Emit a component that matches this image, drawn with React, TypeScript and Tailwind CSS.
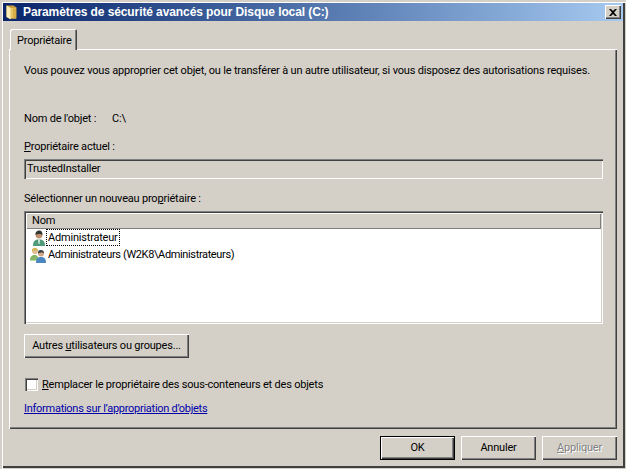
const raised =
  "bg-[#d4d0c8] shadow-[inset_1px_1px_0_#fff,inset_-1px_-1px_0_#404040,inset_-2px_-2px_0_#808080]";

function FolderIcon() {
  return (
    <svg width="11" height="15" viewBox="0 0 11 15" className="shrink-0">
      <path d="M0.5 0.5 H7.5 L10.5 2.5 V13.5 H4 L0.5 12 Z" fill="#c9a03c" />
      <path d="M4 3 H10 V13.5 H4 Z" fill="#e6c566" />
      <path d="M0.5 0.5 L4.5 3 V14.5 L0.5 12 Z" fill="#fbeeb4" />
      <path d="M7 3.5 H10 V13 H7 Z" fill="#d9ad45" />
    </svg>
  );
}

function CloseIcon() {
  return (
    <svg width="8" height="7" viewBox="0 0 8 7">
      <path d="M0 0h2l2 2 2-2h2L5 3.5 8 7H6L4 5 2 7H0l3-3.5z" fill="#000" />
    </svg>
  );
}

function UserIcon() {
  return (
    <svg width="16" height="16" viewBox="0 0 16 16" className="shrink-0">
      <path d="M2 16 C2 11 4 9.5 8 9.5 C12 9.5 14 11 14 16 Z" fill="#4f9a78" />
      <path d="M7 9.5 L9 9.5 L8.5 14 L7.5 14 Z" fill="#d9efe2" />
      <circle cx="8" cy="5" r="3.4" fill="#c08f6e" />
      <path d="M4.5 5 C4.3 1.5 6.5 0.5 8.2 0.5 C10.7 0.5 11.7 2.5 11.4 5 C10 3.5 6.5 3.5 4.5 5 Z" fill="#333835" />
    </svg>
  );
}

function GroupIcon() {
  return (
    <svg width="17" height="16" viewBox="0 0 17 16" className="shrink-0">
      <path d="M0 13.5 C0 9.5 2 8 4.5 8 C7 8 8.5 9.5 8.5 13.5 Z" fill="#85b565" />
      <circle cx="5" cy="4.2" r="2.8" fill="#e3bd96" />
      <path d="M2 5 C1.5 1.5 3.5 0.8 5 0.8 C7 0.8 8.2 2 8 5 C7 3 4 3 2 5 Z" fill="#d5b65c" />
      <path d="M6 16 C6 11.5 8 10 11 10 C14 10 16 11.5 16 16 Z" fill="#4a86c0" />
      <circle cx="11" cy="6.5" r="3" fill="#d4a784" />
      <path d="M8 6.5 C7.8 3.5 9.5 3 11 3 C13 3 14.2 4.2 14 6.5 C13 5.2 10 5.2 8 6.5 Z" fill="#3b4048" />
    </svg>
  );
}

function WinButton({
  children,
  width,
  primary,
  disabled,
}: {
  children: React.ReactNode;
  width: string;
  primary?: boolean;
  disabled?: boolean;
}) {
  return (
    <div
      className={`${width} h-[24px] flex items-center justify-center whitespace-nowrap ${raised} ${
        primary ? "outline outline-1 outline-black -outline-offset-1 !shadow-[inset_2px_2px_0_#fff,inset_-2px_-2px_0_#404040,inset_-3px_-3px_0_#808080]" : ""
      } ${disabled ? "text-[#808080] [text-shadow:1px_1px_0_#fff]" : "text-black"}`}
    >
      {children}
    </div>
  );
}

export default function App() {
  return (
    <div className="w-[626px] h-[469px] p-[3px] flex flex-col bg-[#d4d0c8] overflow-hidden font-['Roboto',sans-serif] text-[11px] leading-[14px] tracking-[-0.2px] text-black whitespace-nowrap shadow-[inset_2px_2px_0_#d4d0c8,inset_3px_3px_0_#fff,inset_-1px_-1px_0_#d4d0c8,inset_-3px_-3px_0_#404040]">
      <div className="h-[18px] flex items-center pl-[3px] pr-[2px] bg-linear-to-r from-[#0a246a] to-[#a6caf0]">
        <FolderIcon />
        <span className="ml-[6px] font-bold text-white font-['Liberation_Sans',sans-serif] text-[12px] tracking-[-0.1px]">
          Paramètres de sécurité avancés pour Disque local (C:)
        </span>
        <div className={`ml-auto w-[16px] h-[14px] flex items-center justify-center ${raised}`}>
          <CloseIcon />
        </div>
      </div>

      <div className="px-[6px] mt-[8px]">
        <div className="relative z-10 ml-[1px] -mb-[1px] w-[67px] h-[21px] pl-[7px] pt-[5px] rounded-t-[2px] bg-[#d4d0c8] shadow-[inset_1px_1px_0_#fff,inset_-1px_0_0_#404040,inset_-2px_0_0_#808080]">
          Propriétaire
        </div>
        <div className="h-[380px] pl-[15px] pr-[14px] pt-[15px] bg-[#d4d0c8] shadow-[inset_1px_1px_0_#fff,inset_-1px_-1px_0_#404040,inset_-2px_-2px_0_#808080]">
          <p className="tracking-[-0.18px]">Vous pouvez vous approprier cet objet, ou le transférer à un autre utilisateur, si vous disposez des autorisations requises.</p>

          <div className="mt-[34px] flex">
            <span className="w-[88px]">Nom de l'objet :</span>
            <span>C:\</span>
          </div>

          <p className="mt-[14px]">
            <u>P</u>ropriétaire actuel :
          </p>
          <div className="mt-[5px] h-[20px] pl-[3px] flex items-center bg-[#d4d0c8] shadow-[inset_1px_1px_0_#808080,inset_2px_2px_0_#404040,inset_-1px_-1px_0_#fff]">
            TrustedInstaller
          </div>

          <p className="mt-[13px]">
            Sélectionner un nouveau pro<u>p</u>riétaire :
          </p>
          <div className="mt-[5px] h-[113px] p-[2px] bg-white shadow-[inset_1px_1px_0_#808080,inset_2px_2px_0_#404040,inset_-1px_-1px_0_#fff,inset_-2px_-2px_0_#d4d0c8]">
            <div className="h-[16px] pl-[6px] flex items-center bg-[#d4d0c8] shadow-[inset_1px_1px_0_#fff,inset_-1px_-1px_0_#808080]">
              Nom
            </div>
            <div className="h-[17px] pl-[5px] flex items-center">
              <UserIcon />
              <span className="-ml-[1px] px-[1px] h-[17px] flex items-center border border-dotted border-black">
                Administrateur
              </span>
            </div>
            <div className="h-[17px] pl-[4px] flex items-center">
              <GroupIcon />
              <span className="ml-[1px] tracking-[-0.37px]">Administrateurs (W2K8\Administrateurs)</span>
            </div>
          </div>

          <div className="mt-[10px]">
            <WinButton width="w-[165px]">
              <span>
                Autres <u>u</u>tilisateurs ou groupes...
              </span>
            </WinButton>
          </div>

          <div className="mt-[20px] flex items-center h-[13px]">
            <div className="w-[13px] h-[13px] ml-[1px] bg-white shadow-[inset_1px_1px_0_#808080,inset_2px_2px_0_#404040,inset_-1px_-1px_0_#fff,inset_-2px_-2px_0_#d4d0c8]" />
            <span className="ml-[4px]">
              <u>R</u>emplacer le propriétaire des sous-conteneurs et des objets
            </span>
          </div>

          <a className="block mt-[11px] w-fit text-[#0000a8] underline tracking-[-0.27px]">Informations sur l’appropriation d’objets</a>
        </div>

        <div className="mt-[7px] flex justify-end gap-[6px]">
          <WinButton width="w-[75px]" primary>
            OK
          </WinButton>
          <WinButton width="w-[75px]">Annuler</WinButton>
          <WinButton width="w-[75px]" disabled>
            <span>
              <u>A</u>ppliquer
            </span>
          </WinButton>
        </div>
      </div>
    </div>
  );
}
